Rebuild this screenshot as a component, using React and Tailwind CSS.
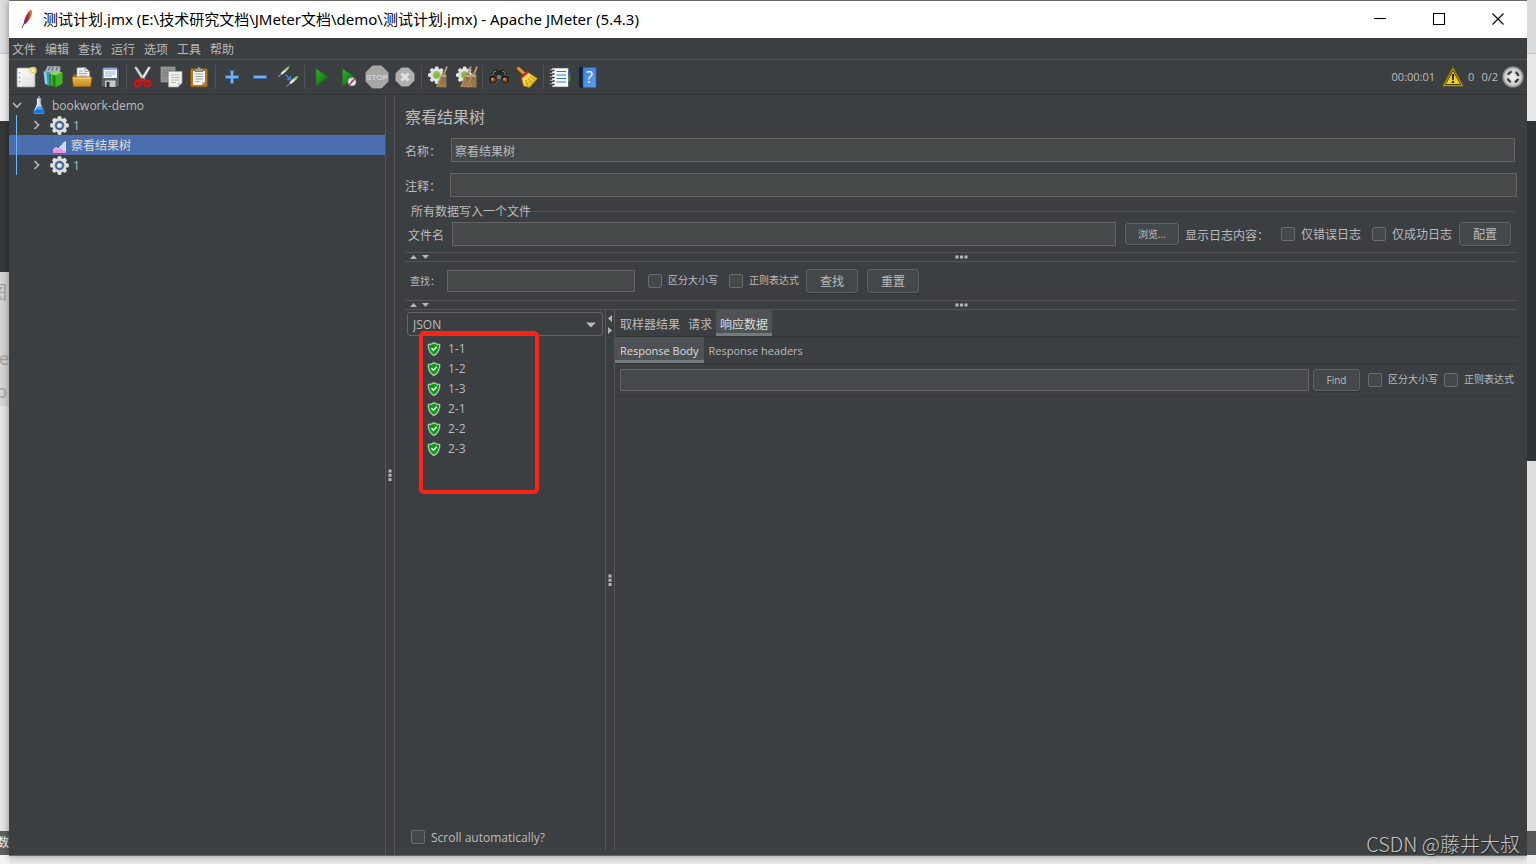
import React from "react";

const menuItems = ["文件", "编辑", "查找", "运行", "选项", "工具", "帮助"];
const samples = ["1-1", "1-2", "1-3", "2-1", "2-2", "2-3"];

/* ---------- shared drawings ---------- */

function Defs() {
  return (
    <svg width="0" height="0" className="absolute" aria-hidden="true">
      <defs>
        <linearGradient id="paper" x1="0" y1="0" x2="1" y2="1">
          <stop offset="0" stopColor="#ffffff" />
          <stop offset="1" stopColor="#dcdcda" />
        </linearGradient>
        <linearGradient id="folder" x1="0" y1="0" x2="0" y2="1">
          <stop offset="0" stopColor="#e9b84e" />
          <stop offset="1" stopColor="#c98a1b" />
        </linearGradient>
        <linearGradient id="play" x1="0" y1="0" x2="1" y2="1">
          <stop offset="0" stopColor="#3fae3a" />
          <stop offset="0.5" stopColor="#1f8a1c" />
          <stop offset="1" stopColor="#0c5f0c" />
        </linearGradient>
        <linearGradient id="book" x1="0" y1="0" x2="1" y2="1">
          <stop offset="0" stopColor="#3b7fd6" />
          <stop offset="1" stopColor="#5f9ff0" />
        </linearGradient>
        <radialGradient id="ball" cx="0.5" cy="0.5" r="0.5">
          <stop offset="0" stopColor="#f4f4f4" />
          <stop offset="0.75" stopColor="#cfcfcf" />
          <stop offset="1" stopColor="#6d6d6d" />
        </radialGradient>
        <linearGradient id="yellowBroom" x1="0" y1="0" x2="1" y2="1">
          <stop offset="0" stopColor="#fff27a" />
          <stop offset="1" stopColor="#d9a400" />
        </linearGradient>
        <linearGradient id="feather" x1="0" y1="1" x2="1" y2="0">
          <stop offset="0" stopColor="#6b2a7c" />
          <stop offset="0.4" stopColor="#c4202f" />
          <stop offset="1" stopColor="#f08a20" />
        </linearGradient>
      </defs>
    </svg>
  );
}

function Icon({ children }) {
  return (
    <svg viewBox="0 0 28 28" className="size-7" aria-hidden="true">
      {children}
    </svg>
  );
}

const gearPath =
  "M8.6 0h2.8l.5 2.4 1.9.8 2.1-1.4 2 2-1.4 2.1.8 1.9 2.7.6v2.8l-2.7.6-.8 1.9 1.4 2.1-2 2-2.1-1.4-1.9.8-.5 2.8H8.6l-.5-2.8-1.9-.8-2.1 1.4-2-2 1.4-2.1-.8-1.9L0 11.200V8.400l2.700-.6.8-1.9-1.400-2.100 2-2 2.100 1.400 1.900-.8z";

function BrownBroom({ x = 0 }) {
  return (
    <g transform={`translate(${x} 0)`}>
      <path d="M22.500 3.500 19.500 11" stroke="#b39872" strokeWidth="2" />
      <path d="M17.500 10 21.800 11 22 24.500 11.500 24 Z" fill="#a88558" />
      <path d="M18.500 14 15 23.500M19.500 14 18 24M20.600 14 20.500 24" stroke="#7d5e37" strokeWidth="0.700" />
      <path d="M17 12.500 21.500 13.500" stroke="#d8c09a" strokeWidth="1" />
    </g>
  );
}

function SmallGear() {
  return (
    <g>
      <g transform="translate(4.500 4) scale(.82)">
        <path d={gearPath} fill="#e6e6e4" stroke="#e6e6e4" strokeWidth="1.200" strokeLinejoin="round" />
      </g>
      <circle cx="12.600" cy="12" r="3.900" fill="#a9b99c" />
      <circle cx="12.600" cy="12.200" r="2.600" fill="#7ac51f" />
    </g>
  );
}

const icons = {
  new: (
    <Icon>
      <rect x="5" y="5" width="18" height="19" rx="1" fill="url(#paper)" stroke="#9a9a98" strokeWidth="0.800" />
      <path d="M7.500 9.500v.8M7.500 14v.8M7.500 18.500v.8" stroke="#555" strokeWidth="1.300" />
      <circle cx="21" cy="7.500" r="3.800" fill="#f3e98a" opacity=".8" />
      <circle cx="21" cy="7.500" r="2.200" fill="#fff9b0" stroke="#dac53a" strokeWidth="0.800" />
    </Icon>
  ),
  templates: (
    <Icon>
      <path d="M5 8.500 7.500 3l4.500.5L14.500 3l6 .5-.5 6-7 1.500z" fill="#a9b4ba" />
      <path d="M8 7.500 10 4M11.500 8l2-4M16 7.500l1.500-3.500" stroke="#5f6f78" strokeWidth="1.200" />
      <path d="M3.500 8.500 10 9v14l-5-2z" fill="#3f93c4" />
      <path d="M3.500 8.500 6.500 8.800l1 13-2.500-1z" fill="#8accea" />
      <path d="M9 11l6.500 1.500v12L9.500 22z" fill="#178a12" />
      <path d="M15.500 12.500 22.500 9.500v11l-7 4z" fill="#3fb424" />
      <path d="M9 11 16 8l6.500 1.500-7 3z" fill="#86d95c" />
      <path d="m11.500 11.800.5 10.800" stroke="#6fcb52" strokeWidth="0.900" />
    </Icon>
  ),
  open: (
    <Icon>
      <path d="M5 11.500h6l1.500 2H23V22H5z" fill="#a56e13" />
      <path d="M9 5 17 4.500l4.500 4V17H9z" fill="#f1f1ef" stroke="#b5b5b2" strokeWidth="0.600" />
      <path d="M17 4.500v4h4.500M11 8h4M11 10.500h8M11 13h8" stroke="#9a9a98" strokeWidth="0.900" fill="none" />
      <path d="M4 14h20l-1.500 9.500H5.500z" fill="url(#folder)" stroke="#9c6710" strokeWidth="0.700" />
      <path d="M5.200 15.200h17.500" stroke="#f6d88c" strokeWidth="0.900" />
    </Icon>
  ),
  save: (
    <Icon>
      <path d="M5 5h17.500L23.500 6v18H5z" fill="#5a6067" stroke="#2a2d30" strokeWidth="0.800" />
      <path d="M7.500 4.800h13.500v10.200h-13.500z" fill="#f3f5f8" />
      <path d="M7.500 4.800h13.500v2h-13.500z" fill="#7fa5dc" />
      <path d="M9 9h10.500M9 11h10.500M9 13h7" stroke="#8fb0df" strokeWidth="0.900" />
      <path d="M9 17.500h10.500V24H9z" fill="#c4c8cc" />
      <path d="M10.500 19h3v5h-3z" fill="#2d3135" />
    </Icon>
  ),
  cut: (
    <Icon>
      <path d="M5.500 4.500c.6-1 2-.8 2.600 0L16 16.500l-2 1.500z" fill="#dedfdf" stroke="#8d9090" strokeWidth="0.500" />
      <path d="M21.500 4.500c-.6-1-2-.8-2.600 0L11.500 16.500l2 1.500z" fill="#f3f3f3" stroke="#8d9090" strokeWidth="0.500" />
      <ellipse cx="8.700" cy="20.500" rx="2.900" ry="2.800" fill="none" stroke="#cf1414" strokeWidth="2.400" />
      <ellipse cx="18.300" cy="20.500" rx="2.900" ry="2.800" fill="none" stroke="#cf1414" strokeWidth="2.400" />
      <path d="m10.800 18.500 2.700-2.300 2.700 2.300" stroke="#cf1414" strokeWidth="2.400" fill="none" />
    </Icon>
  ),
  copy: (
    <Icon>
      <path d="M4 4h14v15H4z" fill="#8d8f8f" stroke="#a4a5a5" strokeWidth="0.700" />
      <path d="M6.500 7.500h9M6.500 10h9M6.500 12.500h5" stroke="#7a7c7c" strokeWidth="0.900" />
      <path d="M11.500 8.500H25v11.500l-4 4h-9.500z" fill="#f0f0ee" stroke="#a4a4a2" strokeWidth="0.700" />
      <path d="M14 12h8.500M14 14.500h8.500M14 17h8.500M14 19.500h5" stroke="#b0b0ae" strokeWidth="0.900" />
      <path d="M21 24v-4h4z" fill="#c4c4c2" />
    </Icon>
  ),
  paste: (
    <Icon>
      <rect x="5.500" y="5.500" width="17" height="18.500" rx="1.500" fill="#b87618" stroke="#7d4d0b" strokeWidth="0.800" />
      <path d="M8 8h12v11l-3 3H8z" fill="#f4f4f2" />
      <path d="M10.500 11h7.500M10.500 13.500h7.500M10.500 16h7.500M10.500 18.500h4" stroke="#a0a09e" strokeWidth="1" />
      <path d="M17 22v-3h3z" fill="#bcbcba" />
      <path d="M10 5.500h2.500C12.500 3.500 15.500 3.500 15.500 5.500H18v3h-8z" fill="#9fa2a2" stroke="#5d6060" strokeWidth="0.700" />
    </Icon>
  ),
  expand: (
    <Icon>
      <path d="M12.500 7.500h3v5h5v3h-5v5h-3v-5h-5v-3h5z" fill="#78b0ee" stroke="#3769b8" strokeWidth="0.900" />
    </Icon>
  ),
  collapse: (
    <Icon>
      <path d="M7.500 12.500h13v3h-13z" fill="#78b0ee" stroke="#3769b8" strokeWidth="0.900" />
    </Icon>
  ),
  toggle: (
    <Icon>
      <path d="M4 14 8.500 10" stroke="#a8aaa8" strokeWidth="1" />
      <path d="m8 10.300 5-4.300" stroke="#e4e6e0" strokeWidth="2.300" strokeLinecap="round" />
      <path d="m11.500 6.800 2.800-2.300" stroke="#8fc56a" strokeWidth="2" strokeLinecap="round" />
      <path d="m12.500 23.500 4-3.500" stroke="#a8aaa8" strokeWidth="1" />
      <path d="m17 19.500 4.500-4" stroke="#e4e6e0" strokeWidth="2.600" strokeLinecap="round" />
      <path d="m20.500 15.800 2.800-1.800" stroke="#8fc56a" strokeWidth="2" strokeLinecap="round" />
      <path d="m11.500 11.500 4.500 4.500M16.500 12.800v3.700h-3.700" stroke="#3b82dd" strokeWidth="1.300" fill="none" />
    </Icon>
  ),
  start: (
    <Icon>
      <path d="M9 5.500 21 14 9 23z" fill="url(#play)" stroke="#14750f" strokeWidth="0.800" />
    </Icon>
  ),
  startNoPause: (
    <Icon>
      <path d="M7.500 5.500 19.500 14 7.500 23z" fill="url(#play)" stroke="#14750f" strokeWidth="0.800" />
      <circle cx="17" cy="18.800" r="4" fill="#eef1f6" stroke="#93a9cb" strokeWidth="0.800" />
      <path d="M17 16.500V19l-1.800 1" stroke="#4472b8" strokeWidth="1" fill="none" />
      <path d="m14 22 6.300-6.500" stroke="#cf2a2a" strokeWidth="1.400" />
    </Icon>
  ),
  stop: (
    <Icon>
      <path d="M9.500 3h9L25 9.500v9L18.500 25h-9L3 18.500v-9z" fill="#a6a6a6" stroke="#b5b5b5" strokeWidth="0.800" />
      <text x="14" y="17" textAnchor="middle" fontFamily="Liberation Sans Narrow, Liberation Sans, sans-serif" fontWeight="700" fontSize="8" fill="#d2d2d2">
        STOP
      </text>
    </Icon>
  ),
  shutdown: (
    <Icon>
      <path d="M10.500 5h7L23 10.500v7L17.500 23h-7L5 17.500v-7z" fill="#b0b0b0" stroke="#bcbcbc" strokeWidth="0.800" />
      <path d="m10.500 10.500 7 7m0-7-7 7" stroke="#e2e2e2" strokeWidth="3" />
    </Icon>
  ),
  clear: (
    <Icon>
      <SmallGear />
      <BrownBroom x={0.500} />
    </Icon>
  ),
  clearAll: (
    <Icon>
      <SmallGear />
      <BrownBroom x={-3.500} />
      <BrownBroom x={2.500} />
    </Icon>
  ),
  search: (
    <Icon>
      <path d="M7.500 8.500 11 6.500l2 2h2l2-2 3.500 2 3.500 7H4z" fill="#262625" stroke="#11110f" strokeWidth="0.600" />
      <path d="M8 9.500 11 8M17.500 8l3 1.500M5.500 14 8.500 10.500M22.500 14l-3-3.500" stroke="#8c8c88" strokeWidth="1.100" />
      <circle cx="7.700" cy="16.500" r="4.500" fill="#1b1a19" stroke="#5a5855" strokeWidth="0.800" />
      <circle cx="20.300" cy="16.500" r="4.500" fill="#1b1a19" stroke="#5a5855" strokeWidth="0.800" />
      <circle cx="8" cy="16.700" r="2.500" fill="#8d4f2c" />
      <circle cx="20" cy="16.700" r="2.500" fill="#8d4f2c" />
      <circle cx="7.300" cy="16" r="1" fill="#d59a70" />
      <circle cx="19.300" cy="16" r="1" fill="#d59a70" />
      <rect x="12" y="12" width="4" height="4" rx="1" fill="#777570" />
    </Icon>
  ),
  resetSearch: (
    <Icon>
      <path d="M5.500 5.500 11.500 11" stroke="#7b4a12" strokeWidth="4.400" strokeLinecap="round" />
      <path d="M5.500 5.500 11.500 11" stroke="#d79a3c" strokeWidth="2.800" strokeLinecap="round" />
      <path d="M8.500 14.500 14.500 9 24.500 15.500 16.500 24.500 10.500 23z" fill="url(#yellowBroom)" stroke="#a67c00" strokeWidth="0.700" />
      <path d="m12.500 17 2.500 6M15 15l4 5.500M17 13l5 4" stroke="#b88d00" strokeWidth="0.800" />
      <path d="M8.200 14.500 15 8.500" stroke="#cf2020" strokeWidth="2.400" />
    </Icon>
  ),
  functions: (
    <Icon>
      <path d="M6 5h16.500v19H6z" fill="#fafafa" stroke="#555" strokeWidth="0.600" />
      <path d="M22.500 8.500h2v4h-2z" fill="#1c57c9" />
      <path d="M22.500 12.500h2v6h-2z" fill="#19a02c" />
      <path d="M22.500 18.500h2v3h-2z" fill="#1e4c86" />
      <path d="M10.500 8.500h9.500M10.500 12H20M10.500 15.500H20M10.500 19H20" stroke="#2c74dc" strokeWidth="1.200" />
      <path d="M4.500 7.500h4M4.500 11h4M4.500 14.500h4M4.500 18h4M4.500 21.500h4" stroke="#1b1b1b" strokeWidth="1.500" />
      <path d="M4 6.800h3M4 10.300h3M4 13.800h3M4 17.300h3M4 20.800h3" stroke="#e8e8e8" strokeWidth="0.800" />
    </Icon>
  ),
  help: (
    <Icon>
      <path d="M5.500 4.500H9v20H7l-1.500-2z" fill="#12233d" stroke="#0a1220" strokeWidth="0.600" />
      <path d="M9 4.500h13v20H9z" fill="url(#book)" stroke="#2760ae" strokeWidth="0.600" />
      <text x="15.500" y="20" textAnchor="middle" fontFamily="Open Sans, sans-serif" fontSize="16" fill="#ffffff">
        ?
      </text>
    </Icon>
  ),
};

const toolGroups = [
  [["新建", "new"], ["模板", "templates"], ["打开", "open"], ["保存", "save"]],
  [["剪切", "cut"], ["复制", "copy"], ["粘贴", "paste"]],
  [["全部展开", "expand"], ["全部折叠", "collapse"], ["切换", "toggle"]],
  [["启动", "start"], ["不停顿开始", "startNoPause"], ["停止", "stop"], ["关闭", "shutdown"]],
  [["清除", "clear"], ["清除全部", "clearAll"]],
  [["查找", "search"], ["重置搜索", "resetSearch"]],
  [["函数助手对话框", "functions"], ["帮助", "help"]],
];

function GearIcon() {
  return (
    <svg viewBox="-1 -1 22 22" className="size-[19px]" aria-hidden="true">
      <path d={gearPath} fill="#e2e2df" stroke="#e2e2df" strokeWidth="1.400" strokeLinejoin="round" />
      <circle cx="10" cy="10" r="5.800" fill="#8d9cb4" />
      <circle cx="10" cy="10" r="4.900" fill="#34588f" />
      <circle cx="10" cy="10" r="3.200" fill="#b4c9e8" />
      <path d="m8.500 7.800 4 2.200-4 2.200z" fill="#f4f8ff" />
    </svg>
  );
}

function FlaskIcon() {
  return (
    <svg viewBox="0 0 14 20" className="h-[18px] w-3.5" aria-hidden="true">
      <path d="M5 2.500h4v6.500l3.800 8.500c.3 1-.4 2-1.400 2H2.600c-1 0-1.700-1-1.400-2L5 9z" fill="#c8d9ea" stroke="#8796a5" strokeWidth="0.600" />
      <path d="M3.600 12h6.800l2.300 5.500c.3 1-.4 1.800-1.300 1.800H2.600c-.9 0-1.600-.8-1.300-1.800z" fill="#1c74de" />
      <path d="M4.500 12h5l1 3H5z" fill="#5ba6f5" />
      <path d="M5.500 3v6L2.500 16" stroke="#fff" strokeWidth="1" fill="none" />
      <path d="M7 0v2.500" stroke="#9aa7b3" strokeWidth="1.500" />
    </svg>
  );
}

function GraphIcon() {
  return (
    <svg viewBox="0 0 16 16" className="size-4" aria-hidden="true">
      <path d="M.5 1v14" stroke="#51628a" strokeWidth="0.700" />
      <path d="M9 8c2 0 2-4 6-5v12H5z" fill="#bfe0fa" />
      <path d="M2 15v-3l3-2.500 2.500 1.500L10 9l2 3 3 1v2z" fill="#ef8fd6" />
      <path d="m2 12 3-2.500 2.500 1.500L10 9l2 3 3 1" stroke="#fbd9f3" strokeWidth="0.900" fill="none" />
    </svg>
  );
}

function ShieldIcon() {
  return (
    <svg viewBox="0 0 14 16" className="h-4 w-3.5" aria-hidden="true">
      <path d="M7 .8C8.600 2.200 10.800 2.900 13.200 2.900c.3 5-1.200 9.600-6.200 12.300C2 12.500.5 7.900.8 2.900 3.200 2.900 5.400 2.200 7 .8z" fill="#dfe8db" stroke="#5d665b" strokeWidth="0.700" />
      <path d="M7 2.200c1.500 1.100 3.200 1.600 5.100 1.700 0 4.200-1.400 7.700-5.100 9.900C3.300 11.600 1.900 8.100 1.900 3.900 3.800 3.800 5.500 3.300 7 2.200z" fill="#0f9a18" />
      <path d="m4.500 7.300 2 2L9.700 5.800" stroke="#fff" strokeWidth="1.400" fill="none" />
    </svg>
  );
}

function Chevron({ open }) {
  return (
    <svg viewBox="0 0 10 10" className="size-2.5" fill="none" stroke="#b4b6b7" strokeWidth="1.700" aria-hidden="true">
      <path d={open ? "M1 3l4 4 4-4" : "M2.500 1l4 4-4 4"} />
    </svg>
  );
}

function Dots({ vertical }) {
  return (
    <svg viewBox={vertical ? "0 0 4 12" : "0 0 13 4"} className={vertical ? "h-3 w-1" : "h-1 w-[13px]"} fill="#b4b6b7" aria-hidden="true">
      {vertical ? (
        <path d="M.5.500h3v3h-3zM.5 4.700h3v3h-3zM.5 9h3v3h-3z" />
      ) : (
        <path d="M.5.500h3v3h-3zM5 .500h3v3H5zM9.500.500h3v3h-3z" />
      )}
    </svg>
  );
}

/* ---------- controls ---------- */

function Check({ label, small }) {
  return (
    <label className="flex items-center gap-1.5 whitespace-nowrap">
      <input type="checkbox" className="size-3.5 shrink-0 appearance-none rounded-[2px] border border-[#6b6b6b] bg-[#43494a]" />
      <span className={small ? "text-[10px]" : "pt-0.5"}>{label}</span>
    </label>
  );
}

function Field({ id, className, ...rest }) {
  return (
    <input
      id={id}
      type="text"
      className={"min-w-0 border border-[#646464] bg-[#45494a] px-[3px] text-[#bbbbbb] outline-none " + className}
      {...rest}
    />
  );
}

function Button({ children, className }) {
  return (
    <button type="button" className={"shrink-0 rounded-[3px] border border-[#5e6364] bg-[#43494a] pt-0.5 shadow-[0_1px_1px_#303334] " + className}>
      {children}
    </button>
  );
}

function HorizontalSplitter() {
  return (
    <div className="grid h-2.5 shrink-0 grid-cols-[1fr_auto_1fr] items-center border-y border-[#555555]">
      <svg viewBox="0 0 20 6" className="ml-[5px] h-1.5 w-5" fill="#b4b6b7" aria-hidden="true">
        <path d="M0 5h7L3.500 1zM12 1h7l-3.500 4z" />
      </svg>
      <Dots />
    </div>
  );
}

/* ---------- desktop slivers on both sides of the window ---------- */

function LeftDesktop() {
  return (
    <div className="flex w-[9px] shrink-0 flex-col overflow-hidden bg-[#e6e6e6] text-lg text-[#a3a3a3]">
      <div className="h-[54px] border-b border-[#c8c8c8] bg-[#dfdfdf]" />
      <div className="h-[67px] bg-[#f0f0f0]" />
      <div className="h-[151px] bg-[#363839]" />
      <div className="flex h-[134px] flex-col items-end bg-[#d6d6d6] pt-1 leading-[33px]">
        <span className="mr-0.5">图</span>
        <span className="mt-[33px]">ge</span>
        <span className="mr-0.5">o</span>
      </div>
      <div className="flex-1" />
      <div className="flex h-6 items-center justify-end bg-[#616161] text-xs text-white">数</div>
      <div className="h-[9px] bg-[#f4f4f4]" />
    </div>
  );
}

function RightDesktop() {
  return (
    <div className="flex w-[9px] shrink-0 flex-col bg-[#dedede]">
      <div className="h-[54px] border-b border-[#c4c4c4] bg-[#dcdcdc]" />
      <div className="h-[67px] bg-[#e8e8e8]" />
      <div className="h-[340px] bg-[#303233]" />
      <div className="flex-1" />
      <div className="h-6 bg-[#555555]" />
      <div className="h-[9px] bg-[#efefef]" />
    </div>
  );
}

/* ---------- window parts ---------- */

function TitleBar() {
  return (
    <header className="flex h-[38px] shrink-0 items-center border-t border-[#6b6b6b] bg-white pb-0.5 text-black">
      <svg viewBox="0 0 12 20" className="ml-3 h-5 w-3" aria-hidden="true">
        <path d="M10.500.5c1 2 .5 5-1.500 8.500S5 15 3.200 15.500C2.500 13 3.500 9 6 5 7.500 2.500 9 1 10.500.5z" fill="url(#feather)" />
        <path d="M8.500 4C6 8 3.500 13 1 19" stroke="#6b2a7c" strokeWidth="0.900" fill="none" />
      </svg>
      <h1 className="ml-2.5 flex-1 truncate font-['Noto_Sans','Noto_Sans_CJK_SC',sans-serif] text-[15px]">
        测试计划.jmx (E:\技术研究文档\JMeter文档\demo\测试计划.jmx) - Apache JMeter (5.4.3)
      </h1>
      <div className="flex h-full">
        {[
          ["最小化", "M8 13.500h12"],
          ["最大化", "M8.500 8.500h11v11h-11z"],
          ["关闭窗口", "m8.500 8.500 11 11m0-11-11 11"],
        ].map(([label, d]) => (
          <button key={label} type="button" aria-label={label} className="flex w-[59px] items-center justify-center">
            <svg viewBox="0 0 28 28" className="size-7" fill="none" stroke="#000" strokeWidth="1.100">
              <path d={d} />
            </svg>
          </button>
        ))}
      </div>
    </header>
  );
}

function Toolbar() {
  return (
    <div className="flex h-[35px] shrink-0 items-center border-b border-[#323435] pr-[3px] pl-[3px]">
      {toolGroups.map((group, i) => (
        <React.Fragment key={i}>
          {i > 0 && <div className="mx-0.5 h-6 w-px bg-[#515556]" />}
          {group.map(([label, key]) => (
            <button key={key} type="button" aria-label={label} className="size-7">
              {icons[key]}
            </button>
          ))}
        </React.Fragment>
      ))}
      <div className="ml-auto flex items-center text-[11px]">
        <span>00:00:01</span>
        <button type="button" aria-label="日志警告" className="ml-[7px] size-[22px]">
          <svg viewBox="0 0 22 22" className="size-[22px]" aria-hidden="true">
            <path d="M11 1.500 21.300 20H.7z" fill="#f5cf0a" stroke="#7b6508" strokeWidth="1.200" strokeLinejoin="round" />
            <path d="M11 4.500 18.800 18.500H3.200z" fill="none" stroke="#453a0a" strokeWidth="1" />
            <path d="M9.800 8h2.400l-.5 6h-1.400z" fill="#1d1a06" />
            <circle cx="11" cy="16" r="1.200" fill="#1d1a06" />
          </svg>
        </button>
        <span className="ml-1">0</span>
        <span className="ml-[7px]">0/2</span>
        <svg viewBox="0 0 22 22" className="ml-1 size-[22px]" aria-hidden="true">
          <circle cx="11" cy="11" r="10.800" fill="url(#ball)" />
          <circle cx="11" cy="11" r="5.500" fill="none" stroke="#3b3b3b" strokeWidth="2.400" strokeDasharray="4.600 4.039" strokeDashoffset="-2" />
        </svg>
      </div>
    </div>
  );
}

function ThreadGroupRow() {
  return (
    <li className="flex h-5 items-center gap-2 pl-[23px]">
      <Chevron />
      <GearIcon />
      <span className="-ml-1 pt-0.5">1</span>
    </li>
  );
}

function TestPlanTree() {
  return (
    <nav aria-label="测试计划" className="w-[376px] shrink-0">
      <div className="flex h-5 items-center pl-[3px]">
        <Chevron open />
        <span className="ml-2.5 flex w-5 items-center">
          <FlaskIcon />
        </span>
        <span className="pt-0.5">bookwork-demo</span>
      </div>
      <ul className="relative">
        <ThreadGroupRow />
        <li className="flex h-5 items-center gap-1 bg-[#4b6eaf] pt-0.5 pl-[42px] text-[#dddddd]">
          <GraphIcon />
          察看结果树
        </li>
        <ThreadGroupRow />
        <li aria-hidden="true" className="absolute inset-y-0 left-[7px] w-px bg-[#6cb8ff]" />
      </ul>
    </nav>
  );
}

function ResultsList() {
  return (
    <section className="relative flex w-[201px] shrink-0 flex-col border-r border-[#555555] pt-0.5">
      <div className="relative mx-0.5">
        <select
          aria-label="渲染器"
          className="h-6 w-full appearance-none rounded-[3px] border border-[#646464] bg-[#3c3f41] px-[5px] pt-0.5 text-[#bbbbbb]"
        >
          <option>JSON</option>
        </select>
        <svg viewBox="0 0 10 6" className="pointer-events-none absolute top-[10px] right-[7px] h-1.5 w-2.5" fill="#b4b6b7" aria-hidden="true">
          <path d="M0 .5h10L5 5.500z" />
        </svg>
      </div>
      <ul className="mt-[3px] flex-1">
        {samples.map((name) => (
          <li key={name} className="flex h-5 items-center gap-[7px] pl-[22px]">
            <ShieldIcon />
            {name}
          </li>
        ))}
      </ul>
      <div className="mb-1 ml-1.5">
        <Check label="Scroll automatically?" />
      </div>
      <div className="pointer-events-none absolute top-[21px] left-3.5 h-[163px] w-[120px] rounded-[5px] border-4 border-[#ff2215]" />
    </section>
  );
}

function Tab({ active, latin, children }) {
  return (
    <button
      type="button"
      role="tab"
      aria-selected={!!active}
      className={
        (active ? "border-b-[3px] border-[#747a80] bg-[#4e5254] pt-1.5 text-[#dddddd] " : "pt-[3px] ") +
        (latin ? "h-full px-[5px] text-[11px]" : "h-full px-1")
      }
    >
      {children}
    </button>
  );
}

function ResponsePanel() {
  return (
    <section className="flex min-w-0 flex-1 flex-col">
      <div role="tablist" className="flex h-[27px] border-b border-[#323435] pl-px">
        <Tab>取样器结果</Tab>
        <Tab>请求</Tab>
        <Tab active>响应数据</Tab>
      </div>
      <div role="tablist" className="flex h-[27px] border-b border-[#323435]">
        <Tab latin active>Response Body</Tab>
        <Tab latin>Response headers</Tab>
      </div>
      <div className="flex h-[33px] items-center border-b border-[#353839] pr-[3px] pl-[5px]">
        <Field id="body-find" aria-label="Find" className="h-[22px] flex-1" />
        <Button className="ml-1 h-[22px] w-[47px] text-[10px]">Find</Button>
        <div className="ml-2 flex gap-1.5">
          <Check small label="区分大小写" />
          <Check small label="正则表达式" />
        </div>
      </div>
      <div className="flex-1" />
    </section>
  );
}

function ListenerPanel() {
  return (
    <main className="flex min-w-0 flex-1 flex-col px-2.5 pb-[5px]">
      <h2 className="flex h-[43px] shrink-0 items-center text-base">察看结果树</h2>
      <div className="flex items-center pr-0.5">
        <label htmlFor="name" className="w-[46px] shrink-0 pt-[3px]">名称：</label>
        <Field id="name" defaultValue="察看结果树" className="h-6 flex-1 pt-0.5" />
      </div>
      <div className="mt-[11px] flex items-center">
        <label htmlFor="comment" className="w-[45px] shrink-0 pt-[3px]">注释：</label>
        <Field id="comment" className="h-6 flex-1" />
      </div>
      <div className="mt-[7px] flex h-3.5 items-center gap-0.5 pr-0.5 pl-0.5 leading-[14px]">
        <span className="h-px w-0.5 bg-[#555555]" />
        <span className="pt-0.5">所有数据写入一个文件</span>
        <span className="h-px flex-1 bg-[#555555]" />
      </div>
      <div className="mt-1 flex items-center pr-1.5 pl-[3px]">
        <label htmlFor="filename" className="w-11 shrink-0 pt-[3px]">文件名</label>
        <Field id="filename" className="h-6 flex-1" />
        <Button className="ml-[9px] h-[22px] w-[54px] text-[10px]">浏览...</Button>
        <span className="ml-1.5 w-24 shrink-0 pt-[3px] whitespace-nowrap">显示日志内容：</span>
        <div className="flex gap-[11px]">
          <Check label="仅错误日志" />
          <Check label="仅成功日志" />
        </div>
        <Button className="ml-[7px] h-6 w-[52px]">配置</Button>
      </div>
      <div className="mt-1.5">
        <HorizontalSplitter />
      </div>
      <div className="flex h-[38px] shrink-0 items-center pl-[5px]">
        <label htmlFor="search" className="w-[37px] pt-0.5 text-[10px]">查找：</label>
        <Field id="search" className="h-[22px] w-[188px]" />
        <div className="ml-[13px] flex gap-[11px]">
          <Check small label="区分大小写" />
          <Check small label="正则表达式" />
        </div>
        <Button className="ml-[7px] h-6 w-[52px]">查找</Button>
        <Button className="ml-[9px] h-6 w-[52px]">重置</Button>
      </div>
      <HorizontalSplitter />
      <div className="flex min-h-0 flex-1">
        <ResultsList />
        <div className="grid w-[9px] shrink-0 grid-rows-[1fr_auto_1fr] justify-items-center border-r border-[#555555]">
          <svg viewBox="0 0 6 20" className="mt-[5px] h-5 w-1.5" fill="#b4b6b7" aria-hidden="true">
            <path d="M5 0v7L1 3.500zM1 12v7l4-3.500z" />
          </svg>
          <Dots vertical />
        </div>
        <ResponsePanel />
      </div>
    </main>
  );
}

export default function App() {
  return (
    <div className="relative flex h-screen min-h-[640px] overflow-hidden bg-[#e9e9e9] font-['Open_Sans','Noto_Sans_CJK_SC',sans-serif] text-xs text-[#bbbbbb]">
      <Defs />
      <LeftDesktop />
      <div className="mb-2 flex min-w-0 flex-1 flex-col border-b border-[#6b6565] bg-[#3c3f41] shadow-[0_0_8px_#00000066]">
        <TitleBar />
        <div className="flex h-[22px] shrink-0 items-center gap-[9px] border-b border-[#515556] pt-0.5 pl-[3px]">
          {menuItems.map((item) => (
            <button key={item} type="button">
              {item}
            </button>
          ))}
        </div>
        <Toolbar />
        <div className="flex min-h-0 flex-1">
          <TestPlanTree />
          <div className="flex w-2.5 shrink-0 items-center justify-center border-x border-[#555555]">
            <Dots vertical />
          </div>
          <ListenerPanel />
        </div>
      </div>
      <RightDesktop />
      <p className="pointer-events-none absolute right-4 bottom-1 font-['Noto_Sans_CJK_SC',sans-serif] text-xl leading-8 font-light text-[#c4c4c4] [text-shadow:1px_1px_1px_#222]">
        CSDN @藤井大叔
      </p>
    </div>
  );
}
